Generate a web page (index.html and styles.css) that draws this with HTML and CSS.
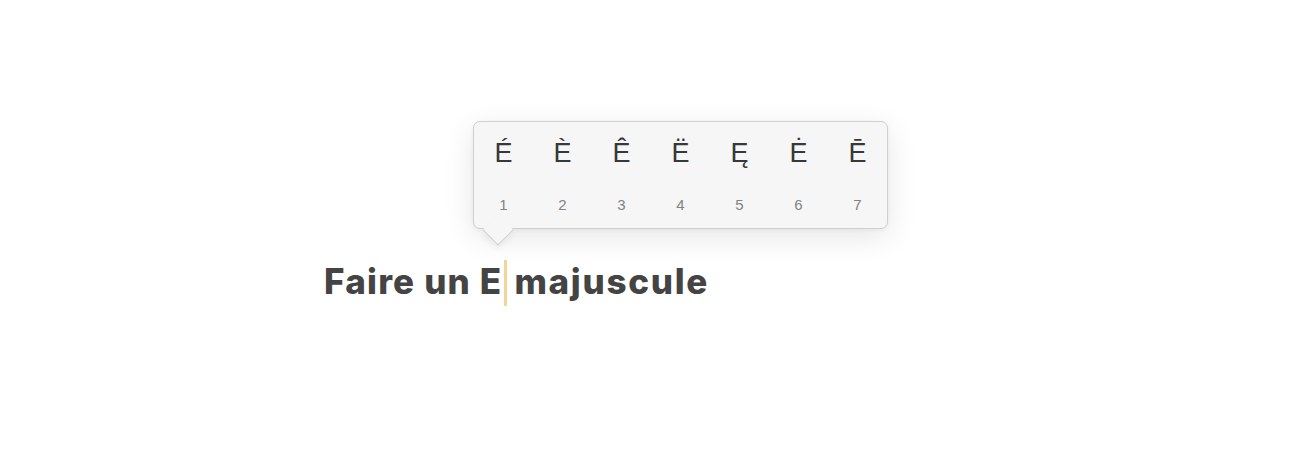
FILE: index.html
```html
<!DOCTYPE html>
<html lang="fr">
<head>
<meta charset="utf-8">
<title>Faire un E majuscule</title>
<link rel="stylesheet" href="styles.css">
</head>
<body>
<div class="stage">
  <div class="popup">
    <div class="row letters">
      <span class="cell">É</span>
      <span class="cell">È</span>
      <span class="cell">Ê</span>
      <span class="cell">Ë</span>
      <span class="cell">Ę</span>
      <span class="cell">Ė</span>
      <span class="cell">Ē</span>
    </div>
    <div class="row numbers">
      <span class="cell">1</span>
      <span class="cell">2</span>
      <span class="cell">3</span>
      <span class="cell">4</span>
      <span class="cell">5</span>
      <span class="cell">6</span>
      <span class="cell">7</span>
    </div>
    <span class="tail"></span>
  </div>
  <h1 class="title">Faire un E<span class="caret"></span><span class="word">majuscule</span></h1>
</div>
</body>
</html>
```
FILE: styles.css
```css
html, body {
  margin: 0;
  padding: 0;
  background: #ffffff;
}
.stage {
  width: 1296px;
  height: 450px;
  padding-top: 121px;
  box-sizing: border-box;
  display: flex;
  flex-direction: column;
  align-items: flex-start;
}
.popup {
  position: relative;
  margin-left: 473px;
  width: 415px;
  box-sizing: border-box;
  background: #f6f6f6;
  border: 1px solid #d0d0d0;
  border-radius: 7px;
  padding: 14px 0 13px 0;
  box-shadow: 0 8px 30px rgba(0, 0, 0, 0.10), 0 1px 4px rgba(0, 0, 0, 0.05);
  font-family: "Liberation Sans", Arial, sans-serif;
}
.row {
  display: grid;
  grid-template-columns: repeat(7, 59px);
}
.cell {
  text-align: center;
}
.letters {
  font-size: 27px;
  line-height: 34px;
  color: #383838;
}
.numbers {
  margin-top: 25px;
  font-size: 15px;
  line-height: 20px;
  color: #838383;
}
.tail {
  position: absolute;
  left: 13px;
  top: 97px;
  width: 21px;
  height: 21px;
  background: #f6f6f6;
  border-right: 1px solid #d0d0d0;
  border-bottom: 1px solid #d0d0d0;
  transform: rotate(45deg);
  box-shadow: 3px 3px 6px rgba(0, 0, 0, 0.05);
}
.title {
  margin: 31px 0 0 324px;
  font-family: Inter, "Liberation Sans", sans-serif;
  font-weight: 800;
  font-size: 35px;
  line-height: 41px;
  color: #444444;
  letter-spacing: 1.2px;
  white-space: nowrap;
}
.word {
  letter-spacing: 1.7px;
}
.caret {
  display: inline-block;
  width: 3px;
  height: 46px;
  background: #f4d596;
  vertical-align: -12px;
  margin: 0 7px 0 2px;
}
```
